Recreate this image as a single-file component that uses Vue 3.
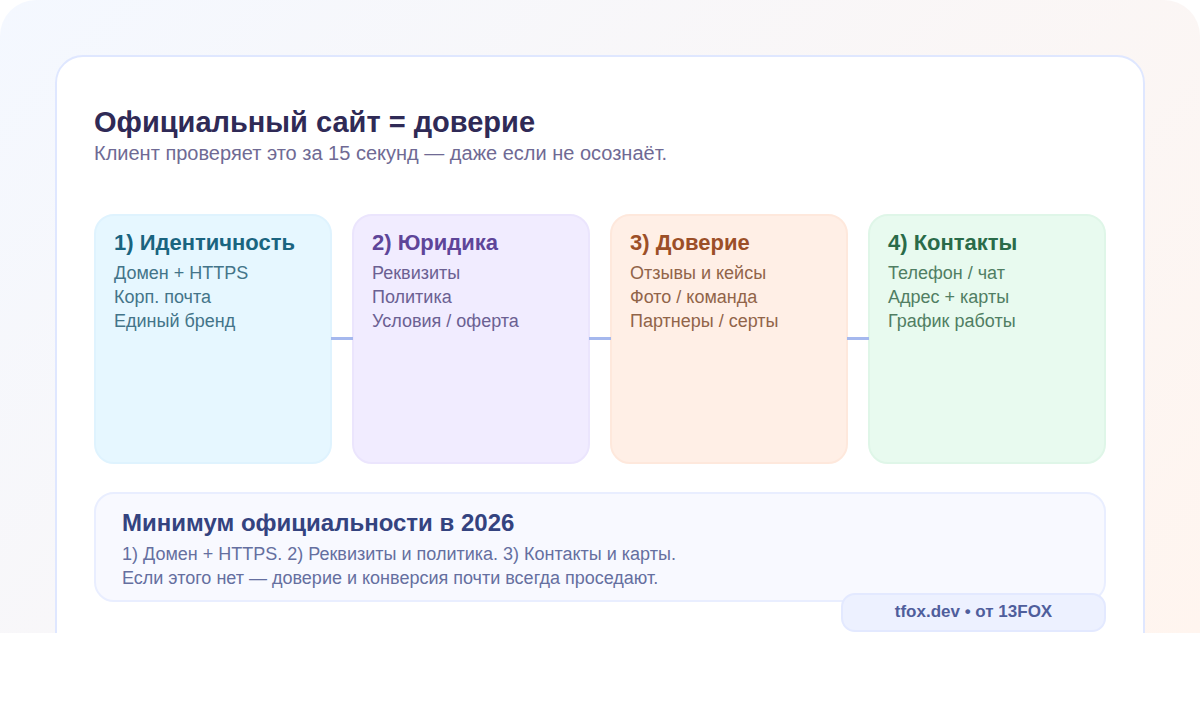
<script setup>
const cards = [
  { key: 'blue', title: '1) Идентичность', lines: ['Домен + HTTPS', 'Корп. почта', 'Единый бренд'] },
  { key: 'violet', title: '2) Юридика', lines: ['Реквизиты', 'Политика', 'Условия / оферта'] },
  { key: 'orange', title: '3) Доверие', lines: ['Отзывы и кейсы', 'Фото / команда', 'Партнеры / серты'] },
  { key: 'green', title: '4) Контакты', lines: ['Телефон / чат', 'Адрес + карты', 'График работы'] }
]
</script>

<template>
  <div class="stage">
    <div class="sheet">
      <h1 class="title">Официальный сайт = доверие</h1>
      <p class="subtitle">Клиент проверяет это за 15 секунд — даже если не осознаёт.</p>

      <div class="cards">
        <div v-for="(card, index) in cards" :key="card.key" class="card" :class="card.key">
          <div class="card-title">{{ card.title }}</div>
          <div v-for="line in card.lines" :key="line" class="card-line">{{ line }}</div>
          <span v-if="index < cards.length - 1" class="link"></span>
        </div>
      </div>

      <div class="summary">
        <div class="summary-title">Минимум официальности в 2026</div>
        <div class="summary-text">1) Домен + HTTPS. 2) Реквизиты и политика. 3) Контакты и карты.</div>
        <div class="summary-text">Если этого нет — доверие и конверсия почти всегда проседают.</div>
        <div class="badge">tfox.dev • от 13FOX</div>
      </div>
    </div>
  </div>
</template>

<style scoped>
.stage {
  height: 633px;
  box-sizing: border-box;
  padding: 55px 55px 0;
  overflow: hidden;
  border-radius: 36px 36px 0 0;
  background: linear-gradient(135deg, #f4f8ff 0%, #fff5ef 100%);
  font-family: "Liberation Sans", Arial, sans-serif;
}
.sheet {
  box-sizing: border-box;
  height: 640px;
  padding: 46px 37px 0;
  background: #fff;
  border: 2px solid #dfe7ff;
  border-radius: 28px;
}
.title {
  margin: 0;
  font-size: 29px;
  line-height: 38px;
  font-weight: 700;
  color: #2f2a56;
}
.subtitle {
  margin: 0;
  font-size: 20px;
  line-height: 24px;
  color: #6f6a94;
}
.cards {
  display: grid;
  grid-template-columns: repeat(4, 238px);
  gap: 20px;
  margin-top: 49px;
}
.card {
  position: relative;
  box-sizing: border-box;
  height: 250px;
  padding: 14px 18px;
  border: 2px solid;
  border-radius: 20px;
}
.card-title {
  margin-bottom: 5px;
  font-size: 22px;
  line-height: 26px;
  font-weight: 700;
}
.card-line {
  font-size: 18px;
  line-height: 24px;
}
.link {
  position: absolute;
  z-index: 1;
  top: 121px;
  left: 235px;
  width: 22px;
  height: 3px;
  background: #a5b8ee;
}
.blue { background: #e6f7ff; border-color: #dff3fe; }
.blue .card-title { color: #1a6480; }
.blue .card-line { color: #437489; }
.violet { background: #f1ecff; border-color: #ebe5fd; }
.violet .card-title { color: #5e4599; }
.violet .card-line { color: #6b6092; }
.orange { background: #ffefe6; border-color: #fee8dc; }
.orange .card-title { color: #9c4f28; }
.orange .card-line { color: #916449; }
.green { background: #e8faef; border-color: #dff6e8; }
.green .card-title { color: #2a6b49; }
.green .card-line { color: #507e63; }
.summary {
  position: relative;
  box-sizing: border-box;
  height: 110px;
  margin-top: 28px;
  padding: 15px 26px;
  background: #f8f9ff;
  border: 2px solid #e9eeff;
  border-radius: 20px;
}
.summary-title {
  margin-bottom: 5px;
  font-size: 24px;
  line-height: 28px;
  font-weight: 700;
  color: #34437f;
}
.summary-text {
  font-size: 18px;
  line-height: 24px;
  color: #656fa0;
}
.badge {
  position: absolute;
  right: -2px;
  bottom: -32px;
  box-sizing: border-box;
  width: 265px;
  height: 39px;
  background: #edf1ff;
  border: 2px solid #e3e9ff;
  border-radius: 14px;
  text-align: center;
  font-size: 17px;
  line-height: 34px;
  font-weight: 700;
  color: #4f5e9c;
}
</style>
